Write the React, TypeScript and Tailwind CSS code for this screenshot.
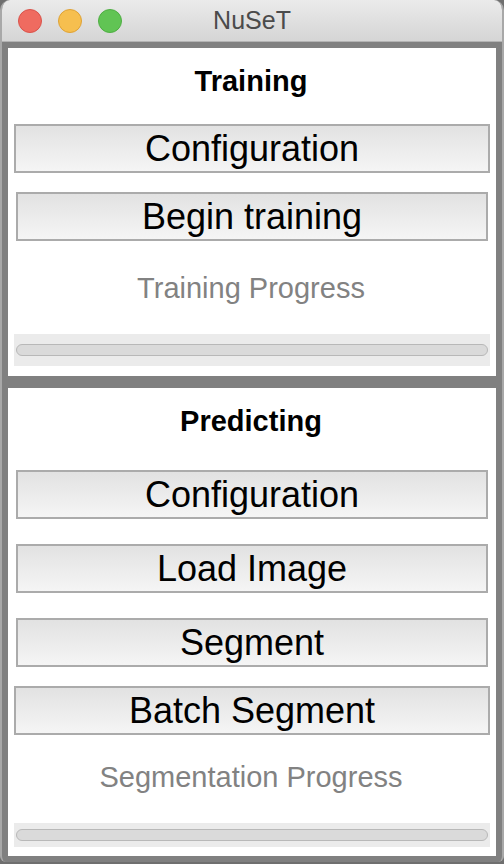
const font = "font-['Liberation_Sans','Helvetica',Arial,sans-serif]";

function MacButton({ label, wide }: { label: string; wide?: boolean }) {
  return (
    <div
      className={`${wide ? "mx-[6px]" : "mx-[8px]"} flex h-[49px] shrink-0 items-center justify-center border-2 border-[#ababab] bg-gradient-to-b from-[#e2e2e2] to-[#f5f5f5] text-[36px] leading-none text-black`}
    >
      {label}
    </div>
  );
}

function ProgressArea({ tall }: { tall?: boolean }) {
  return (
    <div
      className={`mx-[6px] flex ${tall ? "h-[32px]" : "h-[24px]"} shrink-0 items-center bg-[#ebebeb] px-[2px]`}
    >
      <div className="h-[12px] w-full rounded-full border border-[#b8b8b8] bg-[#dadada]" />
    </div>
  );
}

export default function App() {
  return (
    <div className={`${font} h-[864px] w-[504px] overflow-hidden bg-[#6f6f6f]`}>
      <div className="flex h-[862px] flex-col overflow-hidden rounded-t-[10px] rounded-b-[6px] border-x-2 border-[#a8a8a8] bg-[#808080]">
        {/* title bar */}
        <div className="relative flex h-[42px] shrink-0 items-center justify-center border-b border-[#b3b3b3] bg-gradient-to-b from-[#ebebeb] to-[#d5d5d5]">
          <div className="absolute left-[16px] top-[9px] flex gap-[16px]">
            <span className="h-[24px] w-[24px] rounded-full border border-[#d9534b] bg-[#ef6b60]" />
            <span className="h-[24px] w-[24px] rounded-full border border-[#dea236] bg-[#f6bf4f]" />
            <span className="h-[24px] w-[24px] rounded-full border border-[#4fae43] bg-[#61c454]" />
          </div>
          <span className="text-[25px] leading-none text-[#4b4b4b]">NuSeT</span>
        </div>

        <div className="flex flex-1 flex-col gap-[12px] px-[6px] pb-[6px] pt-[6px]">
          {/* Training panel */}
          <div className="flex h-[328px] shrink-0 flex-col bg-white">
            <div className="mt-[16px] pr-[2px] text-center text-[29px] font-bold leading-[34px] text-black">Training</div>
            <div className="mt-[26px]">
              <MacButton label="Configuration" wide />
            </div>
            <div className="mt-[19px]">
              <MacButton label="Begin training" />
            </div>
            <div className="mt-[30px] pr-[2px] text-center text-[29px] leading-[34px] text-[#828282]">Training Progress</div>
            <div className="mt-[29px]">
              <ProgressArea tall />
            </div>
          </div>

          {/* Predicting panel */}
          <div className="flex flex-1 flex-col bg-white">
            <div className="mt-[16px] pr-[2px] text-center text-[29px] font-bold leading-[34px] text-black">Predicting</div>
            <div className="mt-[32px]">
              <MacButton label="Configuration" />
            </div>
            <div className="mt-[25px]">
              <MacButton label="Load Image" />
            </div>
            <div className="mt-[25px]">
              <MacButton label="Segment" />
            </div>
            <div className="mt-[19px]">
              <MacButton label="Batch Segment" wide />
            </div>
            <div className="mt-[25px] pr-[2px] text-center text-[29px] leading-[34px] text-[#828282]">Segmentation Progress</div>
            <div className="mt-[29px]">
              <ProgressArea />
            </div>
          </div>
        </div>
      </div>
    </div>
  );
}
